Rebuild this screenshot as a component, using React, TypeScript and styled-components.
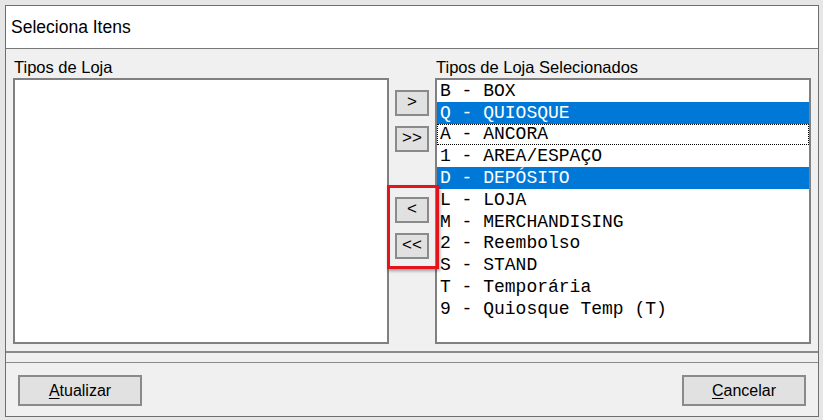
import React from 'react';
import styled, { createGlobalStyle } from 'styled-components';

const GlobalStyle = createGlobalStyle`
  html, body {
    margin: 0;
    padding: 0;
    background: #e6e6e6;
  }
  body {
    font-family: "Liberation Sans", Arial, sans-serif;
    color: #000;
  }
`;

const Screen = styled.div`
  width: 823px;
  height: 420px;
  padding: 5px 0 0 5px;
  box-sizing: border-box;
  overflow: hidden;
`;

const Window = styled.div`
  width: 814px;
  height: 412px;
  box-sizing: border-box;
  border: 1px solid #6e6e6e;
  background: #f0f0f0;
  display: flex;
  flex-direction: column;
`;

const TitleBar = styled.div`
  height: 42px;
  flex: none;
  background: #fff;
  border-bottom: 1px solid #787878;
  display: flex;
  align-items: center;
  padding-left: 5px;
  font-size: 17.5px;
  color: #000;
`;

const TransferPanel = styled.div`
  flex: none;
  height: 304px;
  box-sizing: border-box;
  padding: 10px 7px 0 7px;
  display: grid;
  grid-template-columns: 376px 46px 376px;
  border-bottom: 2px solid #8a8a8a;
`;

const Column = styled.div`
  display: flex;
  flex-direction: column;
`;

const Label = styled.div`
  height: 19px;
  font-size: 16.5px;
  line-height: 17px;
  padding-left: 1px;
`;

const ListBox = styled.div`
  height: 266px;
  box-sizing: border-box;
  background: #fff;
  border: 2px solid #808080;
  display: flex;
  flex-direction: column;
  overflow: hidden;
`;

const Row = styled.div<{ $selected?: boolean; $focused?: boolean }>`
  height: 21.8px;
  flex: none;
  box-sizing: border-box;
  display: flex;
  align-items: center;
  padding-left: 3px;
  font-family: "Liberation Mono", "Courier New", monospace;
  font-size: 18px;
  white-space: pre;
  background: ${(p) => (p.$selected ? '#0078d7' : 'transparent')};
  color: ${(p) => (p.$selected ? '#fff' : '#000')};
  outline: ${(p) => (p.$focused ? '1px dotted #000' : 'none')};
  outline-offset: -1px;
`;

const MoveColumn = styled.div`
  display: flex;
  flex-direction: column;
  align-items: center;
  padding-top: 31px;
`;

const MoveGroup = styled.div<{ $marked?: boolean; $offset: number }>`
  position: relative;
  display: flex;
  flex-direction: column;
  gap: 10px;
  margin-top: ${(p) => p.$offset}px;
  ${(p) =>
    p.$marked &&
    `
    &::before {
      content: '';
      position: absolute;
      left: -8px;
      right: -10px;
      top: -12px;
      bottom: -10px;
      border: 3px solid #e3141b;
      box-shadow: 1px 2px 3px rgba(0, 0, 0, 0.35);
      pointer-events: none;
    }
  `}
`;

const ArrowButton = styled.button`
  width: 34px;
  height: 26px;
  box-sizing: border-box;
  padding: 0 0 2px;
  background: #e1e1e1;
  border: 2px solid #8a8a8a;
  font-family: "Liberation Sans", Arial, sans-serif;
  font-size: 17px;
  color: #000;
`;

const Footer = styled.div`
  flex: 1;
  margin-top: 9px;
  border-top: 1px solid #8a8a8a;
  display: flex;
  justify-content: space-between;
  align-items: flex-start;
  padding: 12px 12px 0 12px;
`;

const DialogButton = styled.button`
  width: 124px;
  height: 31px;
  box-sizing: border-box;
  background: #e1e1e1;
  border: 2px solid #8a8a8a;
  font-family: "Liberation Sans", Arial, sans-serif;
  font-size: 16px;
  color: #000;
  padding: 0;
  u {
    text-decoration: underline;
    text-underline-offset: 2px;
  }
`;

const selectedItems = [
  { text: 'B - BOX' },
  { text: 'Q - QUIOSQUE', selected: true },
  { text: 'A - ANCORA', focused: true },
  { text: '1 - AREA/ESPAÇO' },
  { text: 'D - DEPÓSITO', selected: true },
  { text: 'L - LOJA' },
  { text: 'M - MERCHANDISING' },
  { text: '2 - Reembolso' },
  { text: 'S - STAND' },
  { text: 'T - Temporária' },
  { text: '9 - Quiosque Temp (T)' },
];

export default function App() {
  return (
    <Screen>
      <GlobalStyle />
      <Window>
        <TitleBar>Seleciona Itens</TitleBar>
        <TransferPanel>
          <Column>
            <Label>Tipos de Loja</Label>
            <ListBox />
          </Column>
          <MoveColumn>
            <MoveGroup $offset={0}>
              <ArrowButton>&gt;</ArrowButton>
              <ArrowButton>&gt;&gt;</ArrowButton>
            </MoveGroup>
            <MoveGroup $offset={45} $marked>
              <ArrowButton>&lt;</ArrowButton>
              <ArrowButton>&lt;&lt;</ArrowButton>
            </MoveGroup>
          </MoveColumn>
          <Column>
            <Label>Tipos de Loja Selecionados</Label>
            <ListBox>
              {selectedItems.map((item) => (
                <Row key={item.text} $selected={item.selected} $focused={item.focused}>
                  {item.text}
                </Row>
              ))}
            </ListBox>
          </Column>
        </TransferPanel>
        <Footer>
          <DialogButton>
            <u>A</u>tualizar
          </DialogButton>
          <DialogButton>
            <u>C</u>ancelar
          </DialogButton>
        </Footer>
      </Window>
    </Screen>
  );
}
